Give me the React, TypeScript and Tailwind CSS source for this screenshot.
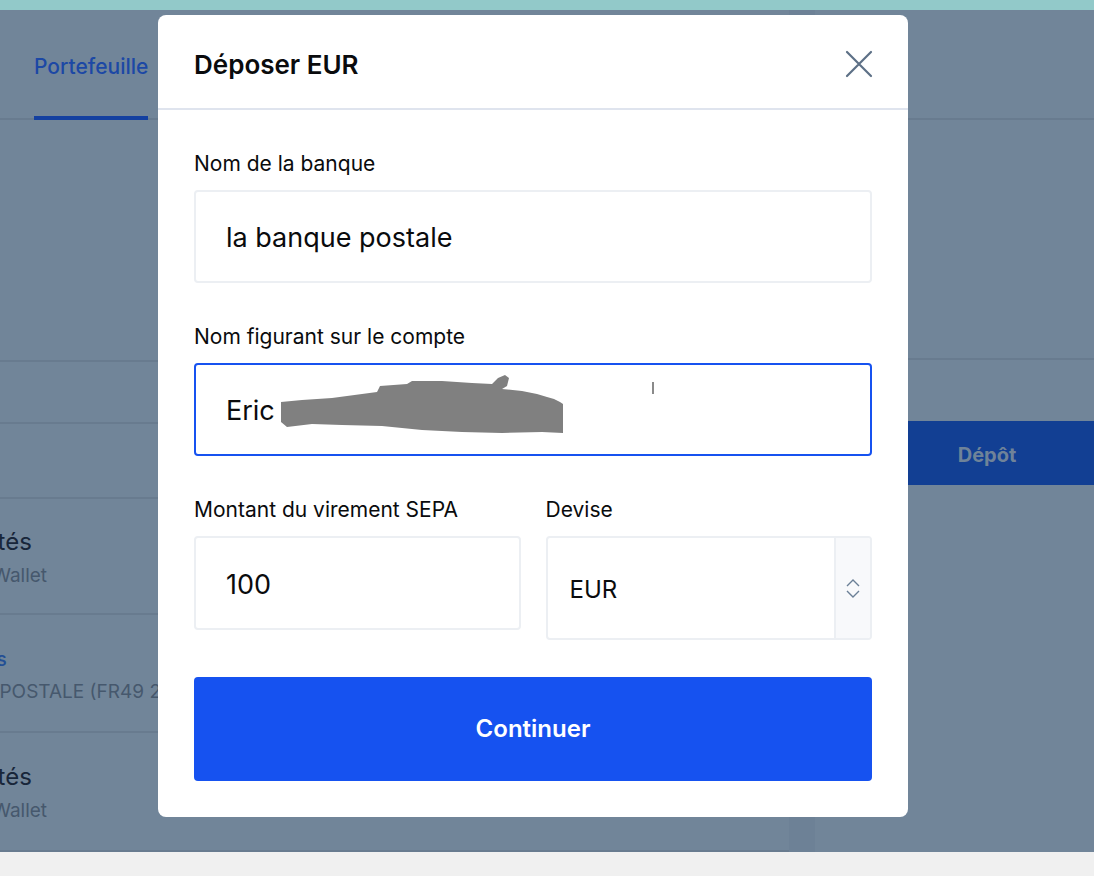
import React from 'react';

function CloseIcon() {
  return (
    <svg width="28" height="28" viewBox="0 0 28 28" fill="none" stroke="#5d7086" strokeWidth="2.2" strokeLinecap="round">
      <path d="M2 2L26 26M26 2L2 26" />
    </svg>
  );
}

function Field({ label, children }: { label: string; children: React.ReactNode }) {
  return (
    <div className="flex flex-col">
      <label className="mb-3 text-[21px] leading-7 text-[#0a0b0d]">{label}</label>
      {children}
    </div>
  );
}

export default function App() {
  return (
    <div className="relative h-[876px] w-[1094px] overflow-hidden bg-[#6d8196] font-['Inter',sans-serif]">
      <div className="h-[10px] bg-[#92c9c9]" />

      {/* page under the dimmed overlay */}
      <div className="flex h-[842px]">
        <div className="flex w-[789px] flex-col bg-[#718599]">
          <div className="flex h-[110px] border-b-2 border-[#687b8f] px-[34px]">
            <div className="-mb-[2px] flex flex-col justify-end">
              <span className="mb-[34px] text-[21px] font-medium text-[#1c48a5]">Portefeuille</span>
              <div className="h-[4px] bg-[#1440a0]" />
            </div>
          </div>
          <div className="h-[242px] border-b-2 border-[#687b8f]" />
          <div className="h-[62px] border-b-2 border-[#687b8f]" />
          <div className="h-[75px] border-b-2 border-[#687b8f]" />
          <div className="flex h-[116px] flex-col justify-center overflow-hidden border-b-2 border-[#687b8f] pt-[3px]">
            <span className="-ml-[77px] text-[24px] leading-9 text-[#18263a]">Liquidités</span>
            <span className="-ml-[51px] text-[19px] leading-8 text-[#46586d]">EUR Wallet</span>
          </div>
          <div className="flex h-[118px] flex-col justify-center overflow-hidden border-b-2 border-[#687b8f] pt-[6px]">
            <span className="-ml-[180px] text-[19px] font-medium leading-8 text-[#234f95]">Virements bancaires</span>
            <span className="-ml-[115px] whitespace-nowrap text-[19px] leading-8 text-[#46586d]">LA BANQUE POSTALE (FR49 2004 1000)</span>
          </div>
          <div className="flex h-[119px] flex-col justify-center overflow-hidden border-b-2 border-[#687b8f] pt-[3px]">
            <span className="-ml-[77px] text-[24px] leading-9 text-[#18263a]">Liquidités</span>
            <span className="-ml-[51px] text-[19px] leading-8 text-[#46586d]">EUR Wallet</span>
          </div>
        </div>
        <div className="w-[26px]" />
        <div className="flex flex-1 flex-col bg-[#718599]">
          <div className="h-[110px] border-b-2 border-[#687b8f]" />
          <div className="h-[240px] border-b-2 border-[#687b8f]" />
          <div className="ml-[65px] mt-[61px] flex h-[64px] items-center justify-center bg-[#123f93] pt-[3px]">
            <span className="text-[20px] font-bold text-[#6f8399]">Dépôt</span>
          </div>
        </div>
      </div>

      <div className="h-[24px] bg-[#f0f0f0]" />

      {/* modal */}
      <div className="absolute left-[158px] top-[15px] w-[750px] rounded-lg bg-white">
        <div className="flex h-[95px] items-center justify-between border-b-2 border-[#dfe4ee] pl-9 pr-[33px] pt-[5px]">
          <h2 className="text-[26px] font-semibold text-[#0a0b0d]">Déposer EUR</h2>
          <button className="flex h-8 w-8 items-center justify-center">
            <CloseIcon />
          </button>
        </div>

        <div className="px-9 pb-[36px] pt-[40px]">
          <div className="flex flex-col gap-10">
            <Field label="Nom de la banque">
              <div className="flex h-[93px] items-center rounded border-2 border-[#eceff3] px-[30px] pt-1 text-[27px] text-[#0a0b0d]">
                la banque postale
              </div>
            </Field>
            <Field label="Nom figurant sur le compte">
              <div className="relative flex h-[93px] items-center rounded border-2 border-[#1652f0] px-[30px] pt-1 text-[27px] text-[#0a0b0d]">
                Eric
                <svg className="absolute left-0 top-0" width="480" height="80" viewBox="0 0 480 80">
                  <polygon
                    fill="#808080"
                    points="85,37 106,35 136,33 151,31 166,29 181,27 184,21 211,19 216,16 246,16 276,18 296,19 302,13 309,10 313,13 311,21 306,24 326,26 341,29 351,32 358,34 364,37 367,39 367,68 346,67 306,68 266,67 226,65 186,61 146,60 116,59 91,62 85,57"
                  />
                  <rect x="456" y="17" width="2" height="12" fill="#8a8a8a" />
                </svg>
              </div>
            </Field>
            <div className="grid grid-cols-2 gap-[25px]">
              <Field label="Montant du virement SEPA">
                <div className="flex h-[94px] items-center rounded border-2 border-[#eceff3] px-[30px] pt-1 text-[27px] text-[#0a0b0d]">
                  100
                </div>
              </Field>
              <Field label="Devise">
                <div className="flex h-[104px] items-stretch overflow-hidden rounded border-2 border-[#eceff3]">
                  <div className="flex flex-1 items-center px-[22px] pt-1 text-[24px] text-[#0a0b0d]">EUR</div>
                  <div className="flex w-[36px] flex-col items-center justify-center gap-[3px] border-l-2 border-[#eceff3] bg-[#f8f9fb]">
                    <svg width="14" height="8" viewBox="0 0 14 8" fill="none" stroke="#6b7f96" strokeWidth="1.4">
                      <path d="M1 7L7 1L13 7" />
                    </svg>
                    <svg width="14" height="8" viewBox="0 0 14 8" fill="none" stroke="#6b7f96" strokeWidth="1.4">
                      <path d="M1 1L7 7L13 1" />
                    </svg>
                  </div>
                </div>
              </Field>
            </div>
          </div>

          <button className="mt-[37px] flex h-[104px] w-full items-center justify-center rounded bg-[#1652f0] text-[24px] font-semibold text-white">
            Continuer
          </button>
        </div>
      </div>
    </div>
  );
}
